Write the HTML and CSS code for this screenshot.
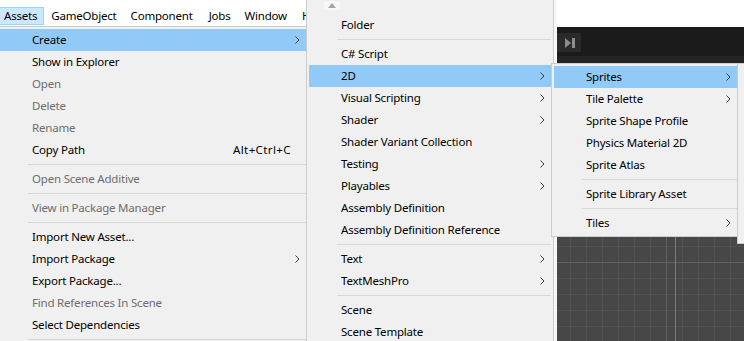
FILE: index.html
```html
<!DOCTYPE html>
<html>
<head>
<meta charset="utf-8">
<link rel="stylesheet" href="styles.css">
</head>
<body>
<div class="app">
  <div class="menubar">
    <span class="mb-item active">Assets</span>
    <span class="mb-item">GameObject</span>
    <span class="mb-item">Component</span>
    <span class="mb-item">Jobs</span>
    <span class="mb-item">Window</span>
    <span class="mb-item">Help</span>
  </div>
  <div class="editor">
    <div class="toolbar">
      <div class="tb-btn"><svg width="10" height="10" viewBox="0 0 10 10"><path d="M1 0 L9 5 L1 10 Z" fill="#8c8c8c"/></svg></div>
      <div class="tb-btn"><svg width="10" height="10" viewBox="0 0 10 10"><rect x="1" y="0" width="3" height="10" fill="#8c8c8c"/><rect x="6" y="0" width="3" height="10" fill="#8c8c8c"/></svg></div>
      <div class="tb-btn step"><svg width="10" height="10" viewBox="0 0 10 10"><path d="M0 0 L6 5 L0 10 Z" fill="#8c8c8c"/><rect x="7" y="0" width="3" height="10" fill="#8c8c8c"/></svg></div>
    </div>
    <div class="strip"></div>
    <div class="scene"></div>
  </div>
</div>

<div class="menu m-assets">
  <div class="mi hl"><span class="label">Create</span><svg class="chev" viewBox="0 0 5 8"><path d="M0.5 0.5 L4 4 L0.5 7.5" fill="none" stroke="#3c3c3c"/></svg></div>
  <div class="mi"><span class="label">Show in Explorer</span></div>
  <div class="mi dis"><span class="label">Open</span></div>
  <div class="mi dis"><span class="label">Delete</span></div>
  <div class="mi dis"><span class="label">Rename</span></div>
  <div class="mi"><span class="label">Copy Path</span><span class="key">Alt+Ctrl+C</span></div>
  <div class="sep"></div>
  <div class="mi dis"><span class="label">Open Scene Additive</span></div>
  <div class="sep"></div>
  <div class="mi dis"><span class="label">View in Package Manager</span></div>
  <div class="sep"></div>
  <div class="mi"><span class="label">Import New Asset...</span></div>
  <div class="mi"><span class="label">Import Package</span><svg class="chev" viewBox="0 0 5 8"><path d="M0.5 0.5 L4 4 L0.5 7.5" fill="none" stroke="#3c3c3c"/></svg></div>
  <div class="mi"><span class="label">Export Package...</span></div>
  <div class="mi dis"><span class="label">Find References In Scene</span></div>
  <div class="mi"><span class="label">Select Dependencies</span></div>
  <div class="sep"></div>
</div>

<div class="menu m-create">
  <div class="scroll-zone"><div class="scroll-btn"><svg width="8" height="5" viewBox="0 0 8 5"><path d="M0 5 L4 0 L8 5 Z" fill="#a6a6a6"/></svg></div></div>
  <div class="mi"><span class="label">Folder</span></div>
  <div class="sep"></div>
  <div class="mi"><span class="label">C# Script</span></div>
  <div class="mi hl"><span class="label">2D</span><svg class="chev" viewBox="0 0 5 8"><path d="M0.5 0.5 L4 4 L0.5 7.5" fill="none" stroke="#3c3c3c"/></svg></div>
  <div class="mi"><span class="label">Visual Scripting</span><svg class="chev" viewBox="0 0 5 8"><path d="M0.5 0.5 L4 4 L0.5 7.5" fill="none" stroke="#3c3c3c"/></svg></div>
  <div class="mi"><span class="label">Shader</span><svg class="chev" viewBox="0 0 5 8"><path d="M0.5 0.5 L4 4 L0.5 7.5" fill="none" stroke="#3c3c3c"/></svg></div>
  <div class="mi"><span class="label">Shader Variant Collection</span></div>
  <div class="mi"><span class="label">Testing</span><svg class="chev" viewBox="0 0 5 8"><path d="M0.5 0.5 L4 4 L0.5 7.5" fill="none" stroke="#3c3c3c"/></svg></div>
  <div class="mi"><span class="label">Playables</span><svg class="chev" viewBox="0 0 5 8"><path d="M0.5 0.5 L4 4 L0.5 7.5" fill="none" stroke="#3c3c3c"/></svg></div>
  <div class="mi"><span class="label">Assembly Definition</span></div>
  <div class="mi"><span class="label">Assembly Definition Reference</span></div>
  <div class="sep"></div>
  <div class="mi"><span class="label">Text</span><svg class="chev" viewBox="0 0 5 8"><path d="M0.5 0.5 L4 4 L0.5 7.5" fill="none" stroke="#3c3c3c"/></svg></div>
  <div class="mi"><span class="label">TextMeshPro</span><svg class="chev" viewBox="0 0 5 8"><path d="M0.5 0.5 L4 4 L0.5 7.5" fill="none" stroke="#3c3c3c"/></svg></div>
  <div class="sep"></div>
  <div class="mi"><span class="label">Scene</span></div>
  <div class="mi"><span class="label">Scene Template</span></div>
</div>

<div class="menu m-2d">
  <div class="mi hl"><span class="label">Sprites</span><svg class="chev" viewBox="0 0 5 8"><path d="M0.5 0.5 L4 4 L0.5 7.5" fill="none" stroke="#3c3c3c"/></svg></div>
  <div class="mi"><span class="label">Tile Palette</span><svg class="chev" viewBox="0 0 5 8"><path d="M0.5 0.5 L4 4 L0.5 7.5" fill="none" stroke="#3c3c3c"/></svg></div>
  <div class="mi"><span class="label">Sprite Shape Profile</span></div>
  <div class="mi"><span class="label">Physics Material 2D</span></div>
  <div class="mi"><span class="label">Sprite Atlas</span></div>
  <div class="sep"></div>
  <div class="mi"><span class="label">Sprite Library Asset</span></div>
  <div class="sep"></div>
  <div class="mi"><span class="label">Tiles</span><svg class="chev" viewBox="0 0 5 8"><path d="M0.5 0.5 L4 4 L0.5 7.5" fill="none" stroke="#3c3c3c"/></svg></div>
</div>

<div class="menu m-sprites"></div>
</body>
</html>
```

FILE: styles.css
```css
* { box-sizing: border-box; margin: 0; padding: 0; }
html, body { width: 744px; height: 341px; overflow: hidden; }
body {
  position: relative;
  background: #ffffff;
  font-family: "Noto Sans", "Open Sans", sans-serif;
  font-size: 11.5px;
  letter-spacing: -0.2px;
  color: #000;
}
.app { display: flex; flex-direction: column; height: 341px; }

.menubar {
  height: 27px;
  background: #ffffff;
  display: flex;
  align-items: flex-start;
  padding-top: 7px;
  white-space: nowrap;
}
.mb-item {
  height: 18px;
  line-height: 16px;
  padding: 0 6px;
  border: 1px solid transparent;
}
.mb-item:first-child { margin-left: -3px; }
.mb-item:nth-child(3) { padding-right: 8px; }
.mb-item:nth-child(5) { padding-right: 7px; }
.mb-item.active { background: #cce8ff; border-color: #99d1ff; }

.editor { flex: 1; display: flex; flex-direction: column; background: #191919; }
.toolbar {
  height: 29px;
  background: #1b1b1b;
  display: flex;
  align-items: center;
  padding-left: 515px;
}
.tb-btn {
  width: 22px;
  height: 19px;
  background: #2a2a2a;
  display: flex;
  align-items: center;
  justify-content: center;
  margin-top: 2px;
}
.strip { height: 24px; background: #242424; }
.scene {
  flex: 1;
  background:
    linear-gradient(#7c7c7c, #7c7c7c) 675px 0 / 1px 100% no-repeat,
    linear-gradient(#626262, #626262) 666px 0 / 1px 100% no-repeat,
    linear-gradient(#626262, #626262) 0 182px / 100% 1px no-repeat,
    linear-gradient(to right, #515151 1px, transparent 1px) 10px 0 / 16px 16px,
    linear-gradient(to bottom, #515151 1px, transparent 1px) 0 6px / 16px 16px,
    #474747;
}

.menu {
  position: absolute;
  background: #f0f0f0;
  border: 1px solid #cccccc;
  padding: 2px;
  white-space: nowrap;
  overflow: hidden;
}
.m-assets { left: -3px; top: 26px; width: 312px; height: 330px; }
.m-create { left: 306px; top: -1px; width: 248px; height: 360px; box-shadow: 3px 0 0 #f7f7f7; }
.m-2d { left: 551px; top: 63px; width: 189px; }
.m-sprites { left: 737px; top: 63px; width: 30px; height: 181px; }

.mi {
  height: 22px;
  display: flex;
  align-items: center;
  padding: 0 6px 1px 32px;
}
.mi .label { flex: 1; }
.mi.dis { color: #6d6d6d; }
.mi.hl { background: #91c9f7; }
.chev { width: 5px; height: 8px; flex: none; margin-top: 1px; }
.key { margin-right: 9px; letter-spacing: 0.4px; }
.sep { height: 1px; background: #d7d7d7; margin: 3px 0 3px 28px; }

.scroll-zone { height: 13px; padding-left: 15px; }
.scroll-btn {
  width: 16px;
  height: 9px;
  margin-top: -1px;
  background: #f7f7f7;
  display: flex;
  align-items: center;
  justify-content: center;
}
```
